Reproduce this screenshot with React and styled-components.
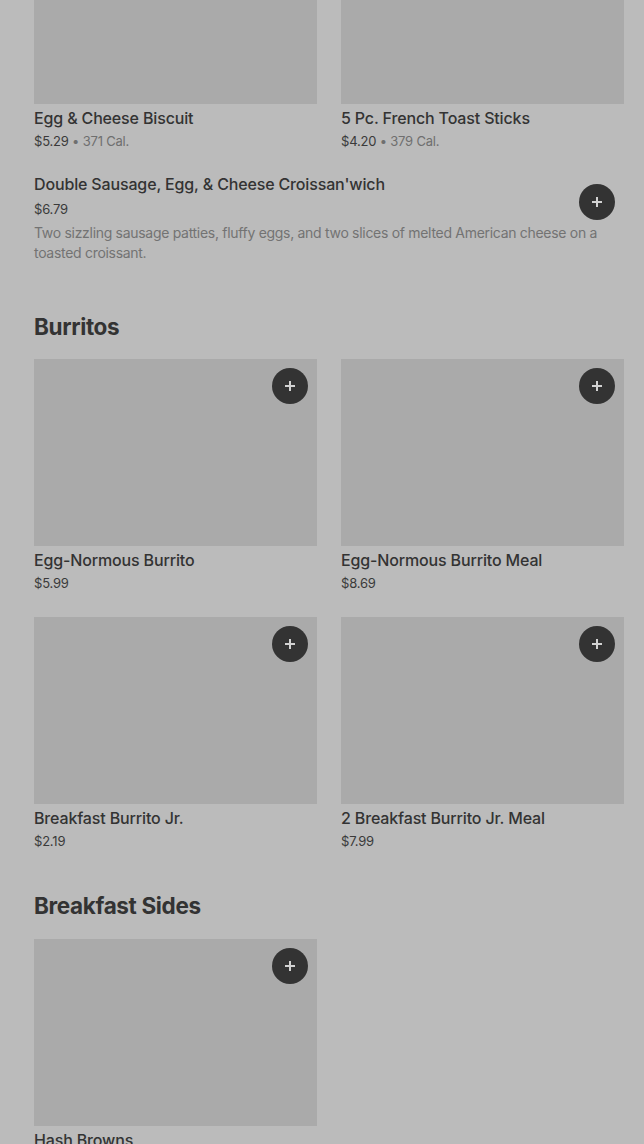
import styled, { createGlobalStyle } from "styled-components";

const GlobalStyle = createGlobalStyle`
  html, body {
    margin: 0;
    padding: 0;
    background: #bbbbbb;
  }
  body {
    font-family: Inter, "Noto Sans", sans-serif;
    color: #333333;
  }
`;

const Page = styled.main`
  height: 1144px;
  overflow: hidden;
  padding: 0 20px 0 34px;
`;

const Scroller = styled.div`
  margin-top: -83px;
`;

const Section = styled.section`
  padding-bottom: ${(p) => p.$bottom || 42}px;
`;

const Heading = styled.h2`
  margin: 0 0 ${(p) => p.$gap ?? 18}px;
  font-size: 22.5px;
  line-height: 28px;
  font-weight: 700;
  letter-spacing: -0.35px;
  color: #333333;
`;

const Grid = styled.div`
  display: grid;
  grid-template-columns: 283px 283px;
  column-gap: 24px;
  row-gap: 25px;
`;

const Card = styled.div`
  display: flex;
  flex-direction: column;
`;

const Picture = styled.div`
  position: relative;
  height: 187px;
  background: #aaaaaa;
  margin-bottom: 4px;
`;

const AddButton = styled.button`
  position: absolute;
  top: ${(p) => p.$top ?? 9}px;
  right: 9px;
  width: 36px;
  height: 36px;
  border: none;
  border-radius: 50%;
  background: #333333;
  display: flex;
  align-items: center;
  justify-content: center;
  padding: 0;
`;

const Title = styled.p`
  margin: 0;
  font-size: 16px;
  line-height: 20px;
  font-weight: 500;
  letter-spacing: -0.15px;
  color: #333333;
`;

const Meta = styled.p`
  margin: ${(p) => p.$gap ?? 4}px 0 0;
  font-size: 13px;
  line-height: 18px;
  color: #3a3a3a;
  letter-spacing: -0.2px;
`;

const Cal = styled.span`
  color: #6f6f6f;
`;

const Row = styled.div`
  position: relative;
  margin-top: 24px;
`;

const Description = styled.p`
  margin: 5px 0 0;
  font-size: 14px;
  line-height: 20px;
  color: #737373;
  letter-spacing: -0.3px;
`;

const Plus = () => (
  <svg width="12" height="12" viewBox="0 0 12 12">
    <path d="M6 1v10M1 6h10" stroke="#d2d2d2" strokeWidth="2" />
  </svg>
);

const MenuCard = ({ item }) => (
  <Card>
    <Picture>
      {item.add !== false && (
        <AddButton aria-label="Add">
          <Plus />
        </AddButton>
      )}
    </Picture>
    <Title>{item.name}</Title>
    <Meta>
      {item.price}
      {item.cal && <Cal> • {item.cal}</Cal>}
    </Meta>
  </Card>
);

const topItems = [
  { name: "Egg & Cheese Biscuit", price: "$5.29", cal: "371 Cal.", add: false },
  { name: "5 Pc. French Toast Sticks", price: "$4.20", cal: "379 Cal.", add: false },
];

const burritos = [
  { name: "Egg-Normous Burrito", price: "$5.99" },
  { name: "Egg-Normous Burrito Meal", price: "$8.69" },
  { name: "Breakfast Burrito Jr.", price: "$2.19" },
  { name: "2 Breakfast Burrito Jr. Meal", price: "$7.99" },
];

const sides = [{ name: "Hash Browns", price: "$2.49" }];

export default function App() {
  return (
    <>
      <GlobalStyle />
      <Page>
        <Scroller>
          <Section $bottom={50}>
            <Grid>
              {topItems.map((item) => (
                <MenuCard key={item.name} item={item} />
              ))}
            </Grid>
            <Row>
              <Title>Double Sausage, Egg, &amp; Cheese Croissan'wich</Title>
              <Meta $gap={6}>$6.79</Meta>
              <Description>
                Two sizzling sausage patties, fluffy eggs, and two slices of
                melted American cheese on a toasted croissant.
              </Description>
              <AddButton $top={10} aria-label="Add">
                <Plus />
              </AddButton>
            </Row>
          </Section>
          <Section>
            <Heading>Burritos</Heading>
            <Grid>
              {burritos.map((item) => (
                <MenuCard key={item.name} item={item} />
              ))}
            </Grid>
          </Section>
          <Section>
            <Heading $gap={19}>Breakfast Sides</Heading>
            <Grid>
              {sides.map((item) => (
                <MenuCard key={item.name} item={item} />
              ))}
            </Grid>
          </Section>
        </Scroller>
      </Page>
    </>
  );
}
